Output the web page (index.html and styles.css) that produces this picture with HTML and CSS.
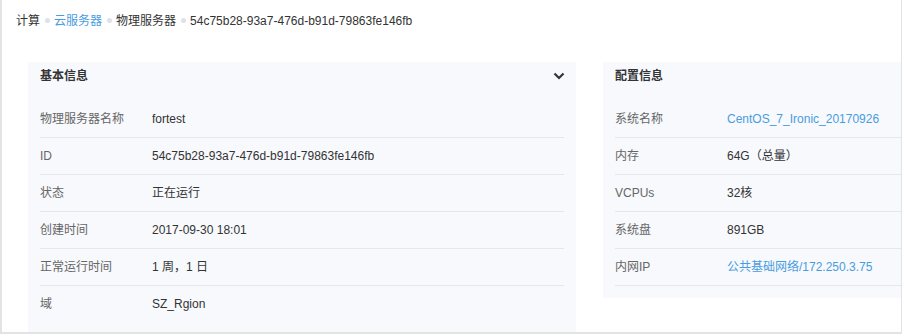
FILE: index.html
```html
<!DOCTYPE html>
<html lang="zh-CN">
<head>
    <meta charset="UTF-8">
    <meta name="viewport" content="width=device-width, initial-scale=1.0">
    <title>物理服务器详情</title>
    <link rel="stylesheet" href="styles.css">
</head>
<body>
    <div class="page_wraper">
        <!-- 面包屑 -->
        <div class="crumb">
            <span class="crumb_item">计算</span>
            <span class="crumb_dot"></span>
            <span class="crumb_item crumb_link">云服务器</span>
            <span class="crumb_dot"></span>
            <span class="crumb_item">物理服务器</span>
            <span class="crumb_dot"></span>
            <span class="crumb_item">54c75b28-93a7-476d-b91d-79863fe146fb</span>
        </div>
        <div class="panel_list">
            <!-- 基本信息 -->
            <div class="info_panel">
                <div class="panel_head">
                    <span class="panel_title">基本信息</span>
                    <svg class="panel_arrow" width="12" height="8" viewBox="0 0 12 8">
                        <polyline points="1.5,1.5 6,6 10.5,1.5" fill="none" stroke="#333" stroke-width="2.2"/>
                    </svg>
                </div>
                <div class="info_list">
                    <div class="info_row"><span class="info_label">物理服务器名称</span><span class="info_value">fortest</span></div>
                    <div class="info_row"><span class="info_label">ID</span><span class="info_value">54c75b28-93a7-476d-b91d-79863fe146fb</span></div>
                    <div class="info_row"><span class="info_label">状态</span><span class="info_value">正在运行</span></div>
                    <div class="info_row"><span class="info_label">创建时间</span><span class="info_value">2017-09-30 18:01</span></div>
                    <div class="info_row"><span class="info_label">正常运行时间</span><span class="info_value">1 周，1 日</span></div>
                    <div class="info_row info_row_last"><span class="info_label">域</span><span class="info_value">SZ_Rgion</span></div>
                </div>
            </div>
            <!-- 配置信息 -->
            <div class="info_panel">
                <div class="panel_head">
                    <span class="panel_title">配置信息</span>
                </div>
                <div class="info_list">
                    <div class="info_row"><span class="info_label">系统名称</span><span class="info_value info_link">CentOS_7_Ironic_20170926</span></div>
                    <div class="info_row"><span class="info_label">内存</span><span class="info_value">64G（总量）</span></div>
                    <div class="info_row"><span class="info_label">VCPUs</span><span class="info_value">32核</span></div>
                    <div class="info_row"><span class="info_label">系统盘</span><span class="info_value">891GB</span></div>
                    <div class="info_row"><span class="info_label">内网IP</span><span class="info_value info_link">公共基础网络/172.250.3.75</span></div>
                </div>
            </div>
        </div>
    </div>
</body>
</html>
```

FILE: styles.css
```css
html,body{
    padding:0;
    margin:0;
    width:100%;
    height:100%;
    background:#fff;
    font-family:"Liberation Sans", Arial, "Noto Sans CJK SC", sans-serif;
    font-size:12px;
    line-height:16px;
    color:#333;
}
.page_wraper{
    box-sizing:border-box;
    width:902px;
    height:334px;
    overflow:hidden;
    border-left:2px solid #e3e3e3;
    border-right:1px solid #e3e3e3;
    border-bottom:2px solid #e3e3e3;
}
/* 面包屑 */
.crumb{
    display:flex;
    align-items:center;
    height:41px;
    padding-left:14px;
}
.crumb_item{
    color:#333;
    white-space:nowrap;
}
.crumb_link{
    color:#4a9ce0;
}
.crumb_dot{
    display:inline-block;
    width:5px;
    height:5px;
    margin:0 4px 0 5px;
    border-radius:50%;
    background-color:#dde2ea;
}
/* 信息面板 */
.panel_list{
    display:flex;
    align-items:flex-start;
    gap:27px;
    padding:21px 0 0 26px;
}
.info_panel{
    flex:none;
    box-sizing:border-box;
    width:548px;
    padding:0 12px 12px;
    background-color:#f7f9fd;
}
.panel_head{
    display:flex;
    align-items:center;
    justify-content:space-between;
    height:28px;
}
.panel_title{
    font-weight:bold;
    color:#333;
}
.panel_arrow{
    display:block;
    margin-right:-1px;
}
.info_list{
    margin-top:11px;
}
.info_row{
    display:flex;
    align-items:center;
    height:36px;
    border-bottom:1px solid #e5e7eb;
}
.info_row.info_row_last{
    border-bottom:1px solid transparent;
}
.info_label{
    width:112px;
    color:#666;
}
.info_value{
    color:#333;
}
.info_value.info_link{
    color:#4a9ce0;
}
```
